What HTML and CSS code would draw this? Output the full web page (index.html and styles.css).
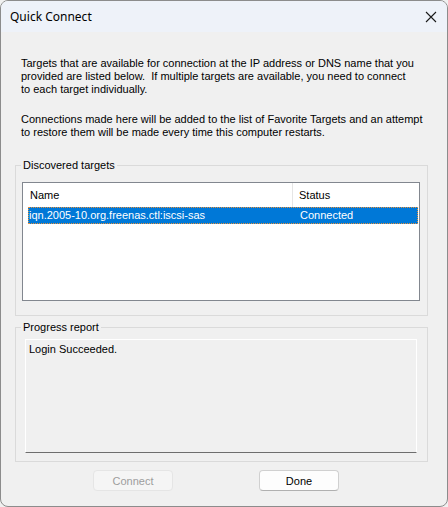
FILE: index.html
```html
<!DOCTYPE html>
<html lang="en">
  <head>
    <meta charset="UTF-8" />
    <title>Quick Connect</title>
    <link rel="stylesheet" href="styles.css">
  </head>
  <body>
    <div class="window">
      <div class="titleBar">
        <span class="title">Quick Connect</span>
        <svg class="closeIcon" width="12" height="12" viewBox="0 0 12 12">
          <path d="M1 1 L11 11 M11 1 L1 11" stroke="#1a1a1a" stroke-width="1.1" fill="none" />
        </svg>
      </div>
      <div class="content">
        <p class="intro">Targets that are available for connection at the IP address or DNS name that you<br>provided are listed below.&nbsp; If multiple targets are available, you need to connect<br>to each target individually.</p>
        <p class="intro second">Connections made here will be added to the list of Favorite Targets and an attempt<br>to restore them will be made every time this computer restarts.</p>

        <fieldset class="group">
          <legend>Discovered targets</legend>
          <div class="listBox">
            <div class="listHead">
              <div class="colName">Name</div>
              <div class="colStatus">Status</div>
            </div>
            <div class="listRow selected">
              <div class="colName">iqn.2005-10.org.freenas.ctl:iscsi-sas</div>
              <div class="colStatus">Connected</div>
            </div>
          </div>
        </fieldset>

        <fieldset class="group progress">
          <legend>Progress report</legend>
          <div class="report">Login Succeeded.</div>
        </fieldset>

        <div class="buttons">
          <button class="btn" disabled>Connect</button>
          <button class="btn">Done</button>
        </div>
      </div>
    </div>
  </body>
</html>
```

FILE: styles.css
```css
html, body {
  margin: 0;
  padding: 0;
  background: #f0f0f0;
}
body {
  font-family: 'Liberation Sans', Arial, sans-serif;
  font-size: 11px;
  line-height: 13px;
  color: #000;
}
.window {
  box-sizing: border-box;
  width: 448px;
  height: 507px;
  border: 1px solid #8c8c8c;
  border-radius: 8px;
  background: #f0f0f0;
  overflow: hidden;
}
.titleBar {
  height: 31px;
  background: #eef2f9;
  display: flex;
  align-items: center;
  justify-content: space-between;
  padding: 0 9px 0 9px;
}
.title {
  font-family: 'Noto Sans', 'Open Sans', sans-serif;
  font-size: 12px;
  line-height: 16px;
  color: #000;
}
.closeIcon {
  margin-right: 1px;
}
.content {
  padding: 0 0 0 14px;
}
.intro {
  margin: 25px 0 0 6px;
  white-space: nowrap;
}
.intro.second {
  margin-top: 17px;
}
.group {
  margin: 20px 0 0 0;
  width: 413px;
  box-sizing: border-box;
  border: 1px solid #dadada;
  padding: 10px 7px 14px 6px;
}
.group legend {
  padding: 0 2px;
  margin-left: -1px;
  line-height: 13px;
}
.listBox {
  height: 119px;
  box-sizing: border-box;
  border: 1px solid #82878f;
  background: #fff;
}
.listHead {
  display: flex;
  height: 24px;
  align-items: center;
}
.listHead .colName {
  box-sizing: border-box;
  width: 270px;
  padding-left: 7px;
  border-right: 1px solid #e5e5e5;
  height: 24px;
  line-height: 24px;
}
.listHead .colStatus {
  padding-left: 6px;
}
.listRow {
  display: flex;
  height: 17px;
  line-height: 15px;
  margin: 0 1px 0 5px;
  box-sizing: border-box;
}
.listRow.selected {
  background: #0078d7;
  color: #fff;
  border: 1px dotted #e8913a;
}
.listRow .colName {
  width: 265px;
}
.listRow .colStatus {
  padding-left: 6px;
}
.group.progress {
  margin-top: 5px;
  padding: 5px 10px 8px 9px;
}
.group.progress legend {
  margin-left: -4px;
}
.report {
  height: 114px;
  box-sizing: border-box;
  border: 1px solid #fff;
  border-bottom-color: #6e6e6e;
  padding: 3px 0 0 3px;
}
.buttons {
  display: flex;
  gap: 86px;
  padding: 8px 0 0 78px;
}
.btn {
  width: 80px;
  height: 21px;
  box-sizing: border-box;
  font-family: 'Liberation Sans', Arial, sans-serif;
  font-size: 11px;
  background: #fdfdfd;
  border: 1px solid #d0d0d0;
  border-bottom-color: #b0b0b0;
  border-radius: 4px;
  color: #000;
  padding: 0;
}
.btn:disabled {
  background: #f5f5f5;
  border-color: #e5e5e5;
  color: #9d9d9d;
}
```
